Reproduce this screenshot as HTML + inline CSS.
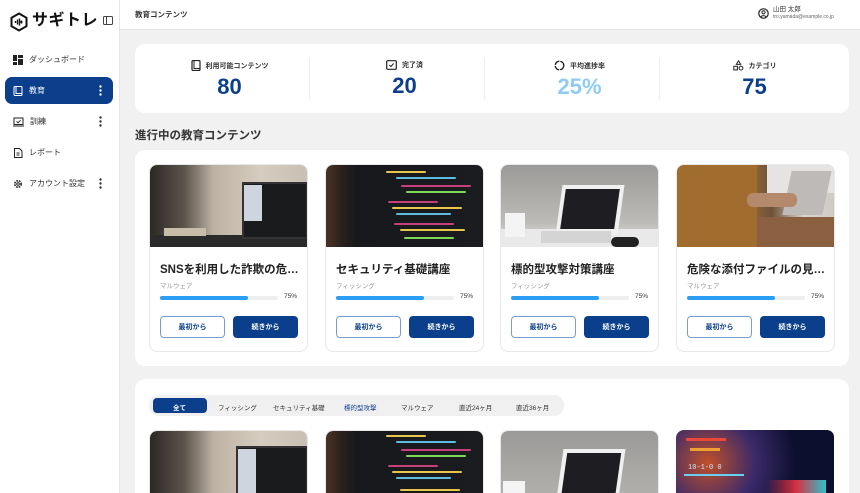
<!DOCTYPE html>
<html lang="ja"><head><meta charset="utf-8">
<style>
*{box-sizing:border-box;margin:0;padding:0}
html{width:860px;height:493px;overflow:hidden}
body{width:860px;height:493px;overflow:hidden;background:#f1f1f1;font-family:"Liberation Sans","Noto Sans CJK JP",sans-serif;color:#222;position:relative}
.abs{position:absolute}
.side{left:0;top:0;width:120px;height:493px;background:#fff;border-right:1px solid #e4e4e4}
.nav{position:absolute;left:5px;width:108px;height:27px;font-size:8px;display:flex;align-items:center;padding-left:8px;color:#333;border-radius:7px}
.nav svg{margin-right:6px}
.nav svg.dots{position:absolute;right:11px;top:8px;margin:0}
.nav.act{background:#0b3f8c;color:#fff}
.top{left:120px;top:0;width:740px;height:30px;background:#fff;border-bottom:1px solid #e6e6e6}
.panel{background:#fff;border-radius:10px}
.stat{position:absolute;top:0;height:69px;width:175px;text-align:center}
.stat .lb{font-size:7px;color:#333;margin-top:16px;display:flex;justify-content:center;align-items:center;gap:5px;font-weight:bold}
.stat .v{font-size:22px;font-weight:bold;color:#0b3f8c;margin-top:3px}
.sep{position:absolute;top:14px;width:1px;height:42px;background:#eee}
.card{position:absolute;width:159px;height:188px;border:1px solid #e8e8e8;border-radius:8px;background:#fff;overflow:hidden}
.img{position:absolute;left:0;top:0;width:158px;height:82px;overflow:hidden;border-radius:7px 7px 0 0}
.t{position:absolute;left:10px;top:96px;font-size:11.5px;font-weight:bold;color:#222;white-space:nowrap}
.c{position:absolute;left:10px;top:115px;font-size:6.5px;color:#999}
.bar{position:absolute;left:10px;top:131px;width:118px;height:4px;background:#eee;border-radius:2px}
.bar i{display:block;width:88px;height:4px;background:#2a9df4;border-radius:2px}
.pc{position:absolute;right:10px;top:128px;font-size:6.5px;color:#333}
.b1,.b2{position:absolute;top:151px;width:65px;height:22px;border-radius:4px;font-size:7px;font-weight:bold;display:flex;align-items:center;justify-content:center}
.b1{left:10px;border:1px solid #7a9ccc;color:#0b3f8c;background:#fff}
.b2{left:83px;background:#0b3f8c;color:#fff}
.tabs{left:149px;top:395px;width:415px;height:21px;background:#f0f0f0;border-radius:10px;font-size:6.5px;color:#333}
.tabs span{position:absolute;top:7px}
.code i{position:absolute;height:2px;border-radius:1px}
</style></head><body>

<div class="abs side">
  <svg class="abs" style="left:9px;top:12px" width="20" height="20" viewBox="0 0 20 20"><path d="M10 1.5 L17.5 5.8 V14.2 L10 18.5 L2.5 14.2 V5.8 Z" fill="none" stroke="#111" stroke-width="2"/><path d="M6.5 9v2M8.5 7.5v5M10.5 6.5v7M12.5 8.5v3M10.5 10h3" stroke="#111" stroke-width="1.4"/></svg>
  <div class="abs" style="left:32px;top:11px;font-size:16px;font-weight:bold;letter-spacing:.5px;color:#111;white-space:nowrap;line-height:20px">サギトレ</div>
  <svg class="abs" style="left:103px;top:16px" width="10" height="9" viewBox="0 0 10 9"><rect x=".5" y=".5" width="9" height="8" rx="1" fill="none" stroke="#444"/><path d="M3.5 .5v8" stroke="#444"/></svg>
  <div class="nav" style="top:46px"><svg width="10" height="10" viewBox="0 0 10 10"><rect x="0" y="0" width="4" height="6" fill="#222"/><rect x="5" y="0" width="5" height="3" fill="#222"/><rect x="0" y="7" width="4" height="3" fill="#222"/><rect x="5" y="4" width="5" height="6" fill="#222"/></svg>ダッシュボード</div>
  <div class="nav act" style="top:77px"><svg width="10" height="10" viewBox="0 0 10 10"><rect x="1" y=".5" width="8" height="9" rx="1" fill="none" stroke="#fff"/><path d="M3 .5v7h6" fill="none" stroke="#fff"/></svg>教育<svg class="dots" width="3" height="11" viewBox="0 0 3 11"><circle cx="1.5" cy="1.5" r="1.2" fill="#fff"/><circle cx="1.5" cy="5.5" r="1.2" fill="#fff"/><circle cx="1.5" cy="9.5" r="1.2" fill="#fff"/></svg></div>
  <div class="nav" style="top:108px"><svg width="11" height="10" viewBox="0 0 11 10"><rect x="1" y="1" width="9" height="6.5" fill="none" stroke="#222"/><path d="M0 9h11M3.5 4.5l1.5 1.3 2.5-2.5" fill="none" stroke="#222"/></svg>訓練<svg class="dots" width="3" height="11" viewBox="0 0 3 11"><circle cx="1.5" cy="1.5" r="1.2" fill="#333"/><circle cx="1.5" cy="5.5" r="1.2" fill="#333"/><circle cx="1.5" cy="9.5" r="1.2" fill="#333"/></svg></div>
  <div class="nav" style="top:139px"><svg width="10" height="10" viewBox="0 0 10 10"><path d="M1.5 .5h5l2.5 2.5v6.5h-7.5z" fill="none" stroke="#222"/><path d="M3.5 5h3M3.5 7h3" stroke="#222"/></svg>レポート</div>
  <div class="nav" style="top:170px"><svg width="10" height="10" viewBox="0 0 10 10"><circle cx="5" cy="5" r="3.2" fill="none" stroke="#222" stroke-width="1.6" stroke-dasharray="1.6 1"/><circle cx="5" cy="5" r="1.3" fill="none" stroke="#222"/></svg>アカウント設定<svg class="dots" width="3" height="11" viewBox="0 0 3 11"><circle cx="1.5" cy="1.5" r="1.2" fill="#333"/><circle cx="1.5" cy="5.5" r="1.2" fill="#333"/><circle cx="1.5" cy="9.5" r="1.2" fill="#333"/></svg></div>
</div>

<div class="abs top">
  <div class="abs" style="left:15px;top:9px;font-size:7.5px;font-weight:bold;color:#333">教育コンテンツ</div>
  <svg class="abs" style="left:638px;top:8px" width="11" height="11" viewBox="0 0 11 11"><circle cx="5.5" cy="5.5" r="4.7" fill="none" stroke="#222" stroke-width="1.2"/><circle cx="5.5" cy="4.3" r="1.6" fill="none" stroke="#222"/><path d="M2.8 8.8c1.5-1.6 3.9-1.6 5.4 0" fill="none" stroke="#222"/></svg>
  <div class="abs" style="left:653px;top:6px;font-size:6.5px;color:#333;line-height:1.1">山田 太郎<br><span style="font-size:5px;color:#666">tro.yamada@example.co.jp</span></div>
</div>

<div class="abs panel" style="left:135px;top:44px;width:714px;height:69px">
  <div class="stat" style="left:7px"><div class="lb"><svg width="10" height="11" viewBox="0 0 10 11"><rect x="1" y=".5" width="8" height="10" rx="1" fill="none" stroke="#222" stroke-width="1.2"/><path d="M3 .5v8h6" fill="none" stroke="#222"/></svg>利用可能コンテンツ</div><div class="v">80</div></div>
  <div class="sep" style="left:174px"></div>
  <div class="stat" style="left:182px"><div class="lb"><svg width="11" height="10" viewBox="0 0 11 10"><rect x=".7" y=".7" width="9.6" height="8.6" rx="1" fill="none" stroke="#222" stroke-width="1.2"/><path d="M3.3 5l1.6 1.5 2.8-3" fill="none" stroke="#222"/></svg>完了済</div><div class="v">20</div></div>
  <div class="sep" style="left:349px"></div>
  <div class="stat" style="left:357px"><div class="lb"><svg width="11" height="11" viewBox="0 0 11 11"><circle cx="5.5" cy="5.5" r="4.3" fill="none" stroke="#222" stroke-width="1.4" stroke-dasharray="6 1"/></svg>平均進捗率</div><div class="v" style="color:#8ecbf7">25%</div></div>
  <div class="sep" style="left:524px"></div>
  <div class="stat" style="left:532px"><div class="lb"><svg width="11" height="11" viewBox="0 0 11 11"><path d="M5.5 .8l2.2 3.6h-4.4z" fill="none" stroke="#222"/><rect x=".8" y="6.3" width="3.6" height="3.6" fill="none" stroke="#222"/><circle cx="8" cy="8.1" r="1.9" fill="none" stroke="#222"/></svg>カテゴリ</div><div class="v">75</div></div>
</div>

<div class="abs" style="left:135px;top:127px;font-size:11.5px;font-weight:bold;color:#333">進行中の教育コンテンツ</div>

<div class="abs panel" style="left:135px;top:150px;width:714px;height:216px"></div>

<div class="card" style="left:149px;top:164px">
  <div class="img" style="background:linear-gradient(90deg,#2b2825 0%,#5d554d 22%,#bcb1a3 40%,#d6ccbf 70%,#c9bfb2 100%)">
    <div class="abs" style="left:0;top:70px;width:158px;height:12px;background:#2b2a2a"></div>
    <div class="abs" style="left:92px;top:17px;width:66px;height:57px;background:#1a1b1d;border:2px solid #333"></div>
    <div class="abs" style="left:94px;top:20px;width:18px;height:36px;background:#cfd5de"></div>
    <div class="abs" style="left:14px;top:63px;width:42px;height:8px;background:#c8bda8"></div>
  </div>
  <div class="t">SNSを利用した詐欺の危…</div><div class="c">マルウェア</div><div class="bar"><i></i></div><div class="pc">75%</div>
  <div class="b1">最初から</div><div class="b2">続きから</div>
</div>
<div class="card" style="left:325px;top:164px">
  <div class="img code" style="background:linear-gradient(90deg,#4a3224 0%,#2a211c 10%,#17181b 20%,#1b1c20 100%)">
    <i style="left:60px;top:6px;width:40px;background:#e7c64a"></i><i style="left:70px;top:12px;width:60px;background:#5bbde0"></i><i style="left:75px;top:20px;width:70px;background:#c7407c"></i><i style="left:80px;top:26px;width:60px;background:#7ed957"></i>
    <i style="left:62px;top:36px;width:50px;background:#c7407c"></i><i style="left:66px;top:42px;width:70px;background:#e7c64a"></i><i style="left:70px;top:48px;width:55px;background:#5bbde0"></i>
    <i style="left:68px;top:58px;width:60px;background:#c7407c"></i><i style="left:74px;top:64px;width:65px;background:#e7c64a"></i><i style="left:78px;top:72px;width:50px;background:#7ed957"></i>
  </div>
  <div class="t">セキュリティ基礎講座</div><div class="c">フィッシング</div><div class="bar"><i></i></div><div class="pc">75%</div>
  <div class="b1">最初から</div><div class="b2">続きから</div>
</div>
<div class="card" style="left:500px;top:164px">
  <div class="img" style="background:linear-gradient(180deg,#9c9a98 0%,#bdbbb8 70%,#e8e8e8 100%)">
    <div class="abs" style="left:0;top:64px;width:158px;height:18px;background:#e9e9e9"></div>
    <div class="abs" style="left:58px;top:20px;width:62px;height:50px;background:#f0f0f0;transform:skewX(-8deg)"></div>
    <div class="abs" style="left:62px;top:24px;width:54px;height:40px;background:#1e1e22;transform:skewX(-8deg)"></div>
    <div class="abs" style="left:40px;top:66px;width:70px;height:12px;background:#d4d4d4"></div>
    <div class="abs" style="left:4px;top:48px;width:20px;height:24px;background:#f4f4f4"></div>
    <div class="abs" style="left:110px;top:72px;width:28px;height:10px;background:#222;border-radius:6px"></div>
  </div>
  <div class="t">標的型攻撃対策講座</div><div class="c">フィッシング</div><div class="bar"><i></i></div><div class="pc">75%</div>
  <div class="b1">最初から</div><div class="b2">続きから</div>
</div>
<div class="card" style="left:676px;top:164px">
  <div class="img" style="background:linear-gradient(90deg,#8a5e2a 0%,#b07a35 35%,#6e5238 60%,#d8d4cf 80%,#cfcac4 100%)">
    <div class="abs" style="left:90px;top:0;width:68px;height:28px;background:#e6e4e2"></div>
    <div class="abs" style="left:0;top:0;width:80px;height:82px;background:#a06d2e"></div>
    <div class="abs" style="left:80px;top:52px;width:78px;height:30px;background:#8a6040"></div>
    <div class="abs" style="left:110px;top:6px;width:40px;height:44px;background:#bdbab7;transform:skewX(-12deg)"></div>
    <div class="abs" style="left:70px;top:28px;width:50px;height:14px;background:#b58a6c;border-radius:6px"></div>
  </div>
  <div class="t">危険な添付ファイルの見…</div><div class="c">マルウェア</div><div class="bar"><i></i></div><div class="pc">75%</div>
  <div class="b1">最初から</div><div class="b2">続きから</div>
</div>

<div class="abs panel" style="left:135px;top:379px;width:714px;height:114px;border-radius:10px 10px 0 0"></div>
<div class="abs tabs">
  <div class="abs" style="left:4px;top:3px;width:54px;height:15px;background:#0b3f8c;border-radius:4px"></div>
  <span style="left:24px;color:#fff;font-weight:bold">全て</span>
  <span style="left:69px">フィッシング</span>
  <span style="left:124px">セキュリティ基礎</span>
  <span style="left:195px;color:#0b3f8c">標的型攻撃</span>
  <span style="left:252px">マルウェア</span>
  <span style="left:310px">直近24ヶ月</span>
  <span style="left:367px">直近36ヶ月</span>
</div>

<div class="card" style="left:149px;top:430px;height:63px;border-bottom:none;border-radius:8px 8px 0 0">
  <div class="img" style="background:linear-gradient(90deg,#2b2825 0%,#5d554d 22%,#bcb1a3 40%,#d6ccbf 70%,#c9bfb2 100%)">
    <div class="abs" style="left:86px;top:15px;width:72px;height:67px;background:#1a1b1d;border:2px solid #333"></div>
    <div class="abs" style="left:88px;top:18px;width:18px;height:60px;background:#cfd5de"></div>
  </div>
</div>
<div class="card" style="left:325px;top:430px;height:63px;border-bottom:none;border-radius:8px 8px 0 0">
  <div class="img code" style="background:linear-gradient(90deg,#4a3224 0%,#2a211c 10%,#17181b 20%,#1b1c20 100%)">
    <i style="left:60px;top:4px;width:40px;background:#e7c64a"></i><i style="left:70px;top:10px;width:60px;background:#5bbde0"></i><i style="left:75px;top:18px;width:70px;background:#c7407c"></i><i style="left:80px;top:24px;width:60px;background:#7ed957"></i>
    <i style="left:62px;top:34px;width:50px;background:#c7407c"></i><i style="left:66px;top:40px;width:70px;background:#e7c64a"></i><i style="left:70px;top:46px;width:55px;background:#5bbde0"></i><i style="left:74px;top:58px;width:60px;background:#e7c64a"></i>
  </div>
</div>
<div class="card" style="left:500px;top:430px;height:63px;border-bottom:none;border-radius:8px 8px 0 0">
  <div class="img" style="background:linear-gradient(180deg,#9c9a98 0%,#b8b6b3 100%)">
    <div class="abs" style="left:58px;top:18px;width:62px;height:64px;background:#f0f0f0;transform:skewX(-8deg)"></div>
    <div class="abs" style="left:62px;top:22px;width:54px;height:60px;background:#1e1e22;transform:skewX(-8deg)"></div>
    <div class="abs" style="left:2px;top:50px;width:22px;height:32px;background:#f4f4f4"></div>
  </div>
</div>
<div class="card" style="left:676px;top:430px;height:63px;border:none;border-radius:8px 8px 0 0">
  <div class="img" style="background:radial-gradient(circle at 20% 40%,#c0502a 0%,#3a2a6a 35%,#0d0f2e 65%),#0d0f2e">
    <div class="abs" style="left:10px;top:8px;width:40px;height:3px;background:#e8473a"></div>
    <div class="abs" style="left:14px;top:18px;width:30px;height:3px;background:#f0a030"></div>
    <div class="abs" style="left:8px;top:44px;width:60px;height:2px;background:#6ad0f0"></div>
    <div class="abs" style="left:12px;top:34px;font-size:7px;color:#cfe8ff;font-family:'Liberation Mono',monospace">10-1-0 0</div>
    <div class="abs" style="left:90px;top:50px;width:60px;height:20px;background:linear-gradient(90deg,transparent,#d63040,#30c0d0)"></div>
  </div>
</div>
</body></html>
